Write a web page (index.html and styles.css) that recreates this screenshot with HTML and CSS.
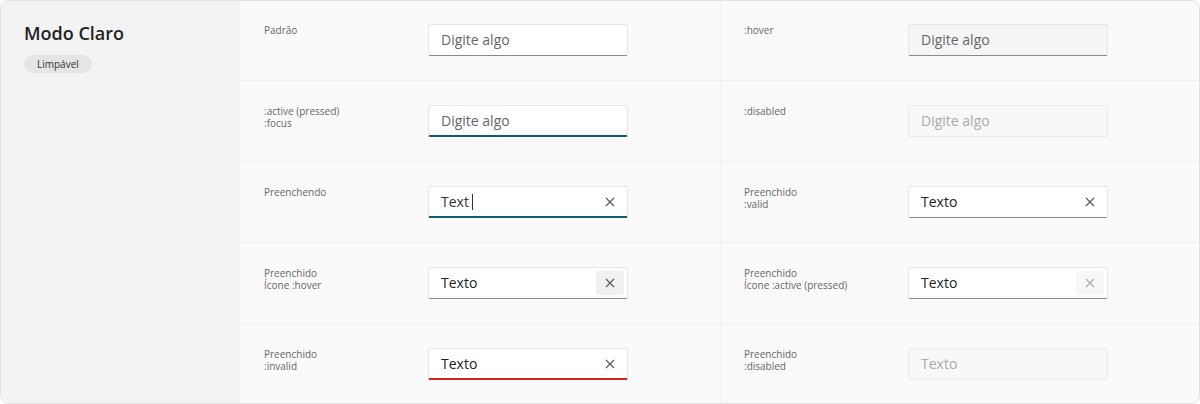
FILE: index.html
```html
<!DOCTYPE html>
<html lang="pt">
<head>
<meta charset="utf-8">
<link rel="stylesheet" href="styles.css">
</head>
<body>
<div class="card">
  <aside class="side">
    <h1 class="title">Modo Claro</h1>
    <span class="badge">Limpável</span>
  </aside>
  <div class="grid">
    <div class="cell first">
      <div class="label">Padrão</div>
      <div class="field"><span class="value ph">Digite algo</span></div>
    </div>
    <div class="cell first">
      <div class="label">:hover</div>
      <div class="field hover"><span class="value ph">Digite algo</span></div>
    </div>

    <div class="cell">
      <div class="label">:active (pressed)<br>:focus</div>
      <div class="field focus"><span class="value ph">Digite algo</span></div>
    </div>
    <div class="cell">
      <div class="label">:disabled</div>
      <div class="field disabled"><span class="value">Digite algo</span></div>
    </div>

    <div class="cell">
      <div class="label">Preenchendo</div>
      <div class="field focus"><span class="value typing">Text<span class="caret"></span></span>
        <span class="clear"><svg width="10" height="10" viewBox="0 0 10 10"><path d="M1 1L9 9M9 1L1 9" stroke="currentColor" stroke-width="1.1" fill="none"/></svg></span>
      </div>
    </div>
    <div class="cell">
      <div class="label">Preenchido<br>:valid</div>
      <div class="field"><span class="value">Texto</span>
        <span class="clear"><svg width="10" height="10" viewBox="0 0 10 10"><path d="M1 1L9 9M9 1L1 9" stroke="currentColor" stroke-width="1.1" fill="none"/></svg></span>
      </div>
    </div>

    <div class="cell">
      <div class="label">Preenchido<br>Ícone :hover</div>
      <div class="field"><span class="value">Texto</span>
        <span class="clear c-hover"><svg width="10" height="10" viewBox="0 0 10 10"><path d="M1 1L9 9M9 1L1 9" stroke="currentColor" stroke-width="1.1" fill="none"/></svg></span>
      </div>
    </div>
    <div class="cell">
      <div class="label">Preenchido<br>Ícone :active (pressed)</div>
      <div class="field"><span class="value">Texto</span>
        <span class="clear c-active"><svg width="10" height="10" viewBox="0 0 10 10"><path d="M1 1L9 9M9 1L1 9" stroke="currentColor" stroke-width="1.1" fill="none"/></svg></span>
      </div>
    </div>

    <div class="cell last">
      <div class="label">Preenchido<br>:invalid</div>
      <div class="field invalid"><span class="value">Texto</span>
        <span class="clear"><svg width="10" height="10" viewBox="0 0 10 10"><path d="M1 1L9 9M9 1L1 9" stroke="currentColor" stroke-width="1.1" fill="none"/></svg></span>
      </div>
    </div>
    <div class="cell last">
      <div class="label">Preenchido<br>:disabled</div>
      <div class="field disabled"><span class="value">Texto</span></div>
    </div>
  </div>
</div>
</body>
</html>
```

FILE: styles.css
```css
* { box-sizing: border-box; }
html, body { margin: 0; padding: 0; background: #fff; }
body { font-family: "Open Sans", "Noto Sans", sans-serif; color: #222; }

.card {
  width: 1200px;
  height: 404px;
  border: 1px solid #e3e3e3;
  border-radius: 8px;
  overflow: hidden;
  display: flex;
  background: #fafafa;
}

.side {
  width: 239px;
  flex: none;
  background: #f3f3f3;
  padding: 20px 23px;
  display: flex;
  flex-direction: column;
  align-items: flex-start;
}
.title {
  margin: 0 0 10px;
  font-size: 18px;
  line-height: 24px;
  font-weight: 600;
  color: #222;
}
.badge {
  height: 18px;
  line-height: 18px;
  padding: 0 13px;
  border-radius: 9px;
  background: #e5e5e5;
  font-size: 10px;
  color: #333;
}

.grid {
  flex: 1;
  display: grid;
  grid-template-columns: 480px 1fr;
  grid-template-rows: 80px 81px 81px 81px 1fr;
}
.cell {
  display: flex;
  align-items: flex-start;
  padding: 24px 0 0 24px;
  border-bottom: 1px solid #efefef;
}
.cell.first { padding-top: 23px; }
.cell:nth-child(even) { border-left: 1px solid #f0f0f0; padding-left: 23px; }
.cell.last { border-bottom: none; }

.label {
  width: 164px;
  flex: none;
  font-size: 10px;
  line-height: 12px;
  color: #666;
}

.field {
  width: 200px;
  height: 32px;
  display: flex;
  align-items: center;
  padding: 0 3px 0 12px;
  background: #fff;
  border: 1px solid #e6e6e6;
  border-bottom: 1px solid #8a8a8a;
  border-radius: 2px;
}
.field.hover { background: #f5f5f5; }
.field.focus { border-bottom: 2px solid #0b5d72; padding-top: 1px; }
.field.invalid { border-bottom: 2px solid #cc2a1f; padding-top: 1px; }
.field.disabled {
  background: #f8f8f8;
  border: 1px solid #ececec;
}
.value {
  flex: 1;
  font-size: 14px;
  line-height: 20px;
  color: #222;
  display: flex;
  align-items: center;
}
.value.ph { color: #666; }
.value.typing { color: #333; }
.field.disabled .value { color: #aaa; }
.caret {
  display: inline-block;
  width: 1px;
  height: 16px;
  margin-left: 3px;
  background: #333;
}

.clear {
  width: 28px;
  height: 24px;
  flex: none;
  display: flex;
  align-items: center;
  justify-content: center;
  border-radius: 3px;
  color: #555;
}
.clear.c-hover { background: #f0f0f0; }
.clear.c-active { background: #f7f7f7; color: #aaa; }
```
